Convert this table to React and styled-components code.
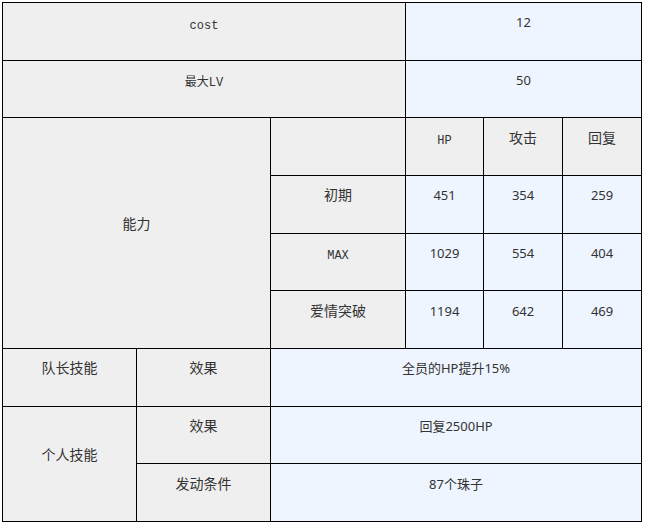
import React from "react";
import styled, { createGlobalStyle } from "styled-components";

const GlobalStyle = createGlobalStyle`
    body {
        margin: 0;
        background: #ffffff;
    }
`;

const cols = [134, 134, 135, 78, 79, 79];

const stats = [
    { label: "初期", mono: false, values: [451, 354, 259] },
    { label: "MAX", mono: true, values: [1029, 554, 404] },
    { label: "爱情突破", mono: false, values: [1194, 642, 469] },
];

// Main page component
const App = () => {
    return (
        <>
            <GlobalStyle />
            <Wrap>
                <Table>
                    <colgroup>
                        {cols.map((w, i) => <col key={i} style={{ width: w }} />)}
                    </colgroup>
                    <tbody>
                        <Row>
                            <Label colSpan={3} $mono>cost</Label>
                            <Value colSpan={3}>12</Value>
                        </Row>
                        <Row>
                            <Label colSpan={3} $mono>最大LV</Label>
                            <Value colSpan={3}>50</Value>
                        </Row>
                        <Row>
                            <Label colSpan={2} rowSpan={4}>能力</Label>
                            <Label />
                            <Label $mono>HP</Label>
                            <Label>攻击</Label>
                            <Label>回复</Label>
                        </Row>
                        {stats.map((s) => (
                            <Row key={s.label}>
                                <Label $mono={s.mono}>{s.label}</Label>
                                {s.values.map((v, i) => <Value key={i}>{v}</Value>)}
                            </Row>
                        ))}
                        <Row>
                            <Label>队长技能</Label>
                            <Label>效果</Label>
                            <Value colSpan={4}>全员的HP提升15%</Value>
                        </Row>
                        <Row>
                            <Label rowSpan={2}>个人技能</Label>
                            <Label>效果</Label>
                            <Value colSpan={4}>回复2500HP</Value>
                        </Row>
                        <Row>
                            <Label>发动条件</Label>
                            <Value colSpan={4}>87个珠子</Value>
                        </Row>
                    </tbody>
                </Table>
            </Wrap>
        </>
    );
};

const Wrap = styled.div`
    padding: 2px;
`;
const Table = styled.table`
    width: 640px;
    table-layout: fixed;
    border-collapse: collapse;
    border: 1px solid #000;
    color: #333333;
`;
const Row = styled.tr`
    height: 57.67px;
`;
const Cell = styled.td`
    border: 1px solid #000;
    text-align: center;
    vertical-align: middle;
    padding: 0 4px 16px;
    line-height: 18px;
`;
const Label = styled(Cell)`
    background-color: #efefef;
    font-family: ${(p) => (p.$mono ? '"Liberation Mono", "Noto Sans CJK SC", monospace' : '"Noto Sans CJK SC", sans-serif')};
    font-size: ${(p) => (p.$mono ? "12px" : "14px")};
    padding-bottom: ${(p) => (p.$mono ? "11px" : "20px")};
`;
const Value = styled(Cell)`
    background-color: #eef5ff;
    font-family: "Noto Sans", "Noto Sans CJK SC", sans-serif;
    font-size: 13px;
    padding-bottom: 18px;
`;

export default App;
